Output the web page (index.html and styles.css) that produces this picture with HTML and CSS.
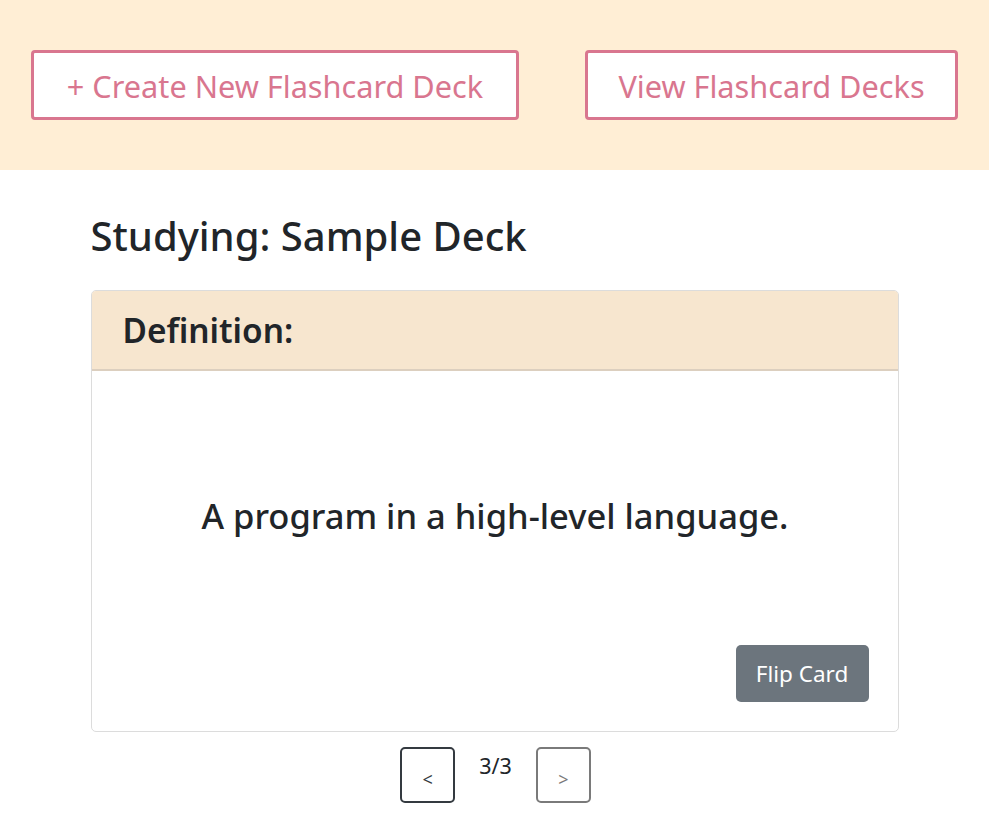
FILE: index.html
```html
<!DOCTYPE html>
<html>
<head>
<meta charset="utf-8">
<link rel="stylesheet" href="styles.css">
</head>
<body>
<header class="topbar">
  <button class="btn-outline btn-create">+ Create New Flashcard Deck</button>
  <button class="btn-outline btn-view">View Flashcard Decks</button>
</header>
<main class="study">
  <h2 class="study-title">Studying: Sample Deck</h2>
  <section class="card">
    <div class="card-header">Definition:</div>
    <div class="card-body">
      <p class="card-text">A program in a high-level language.</p>
      <div class="card-actions">
        <button class="btn-flip">Flip Card</button>
      </div>
    </div>
  </section>
  <nav class="pager">
    <button class="pager-btn pager-prev">&lt;</button>
    <span class="pager-count">3/3</span>
    <button class="pager-btn pager-next">&gt;</button>
  </nav>
</main>
</body>
</html>
```
FILE: styles.css
```css
* { box-sizing: border-box; }
html, body {
  margin: 0;
  padding: 0;
  background: #ffffff;
  font-family: "Noto Sans", "Open Sans", sans-serif;
  color: #212529;
}
.topbar {
  background: #ffeed5;
  height: 170px;
  padding: 50px 31px 0 31px;
  display: flex;
  justify-content: space-between;
  align-items: flex-start;
}
.btn-outline {
  height: 70px;
  padding: 1px 0 0 0;
  background: #ffffff;
  border: 3px solid #d9768f;
  border-radius: 4px;
  color: #d9768f;
  font-family: inherit;
  font-size: 30.7px;
  cursor: pointer;
}
.btn-create { width: 488px; }
.btn-view { width: 373px; }
.study {
  width: 808px;
  margin: 0 auto;
  padding-top: 39px;
}
.study-title {
  margin: 0 0 27px 0;
  font-size: 40px;
  font-weight: 500;
  line-height: 54px;
}
.card {
  border: 1px solid #dcdcdc;
  border-radius: 5px;
  overflow: hidden;
}
.card-header {
  background: #f7e6cf;
  height: 80px;
  padding: 0 31px;
  display: flex;
  align-items: center;
  font-size: 33.4px;
  font-weight: 600;
  border-bottom: 2px solid #dccfbf;
}
.card-body {
  height: 360px;
  padding: 0 29px 29px 30px;
  display: flex;
  flex-direction: column;
}
.card-text {
  margin: 0;
  padding-top: 121px;
  text-align: center;
  font-size: 34.5px;
  font-weight: 500;
  line-height: 48px;
  flex: 1;
}
.card-actions {
  display: flex;
  justify-content: flex-end;
}
.btn-flip {
  width: 133px;
  height: 57px;
  background: #6c757d;
  color: #ffffff;
  border: none;
  border-radius: 5px;
  font-family: inherit;
  font-size: 22.5px;
}
.pager {
  display: flex;
  justify-content: center;
  align-items: flex-start;
  gap: 24px;
  margin-top: 15px;
  padding-left: 2px;
}
.pager-btn {
  width: 55px;
  height: 56px;
  background: #ffffff;
  border-radius: 5px;
  font-family: inherit;
  font-size: 18px;
  padding-top: 8px;
}
.pager-prev {
  border: 2px solid #343a40;
  color: #343a40;
}
.pager-next {
  border: 2px solid #7a7a7a;
  color: #7a7a7a;
}
.pager-count {
  font-size: 21.5px;
  line-height: 28px;
  margin-top: 5px;
}
```
